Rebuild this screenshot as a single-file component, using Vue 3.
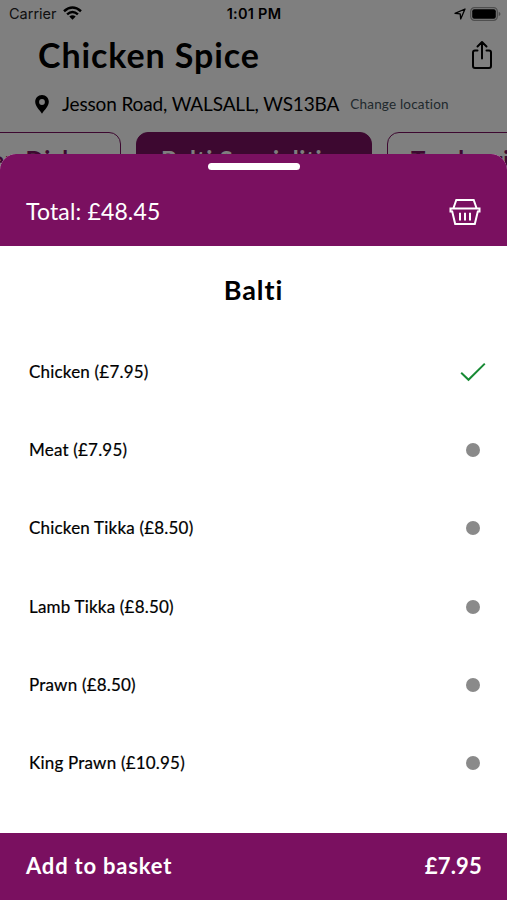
<script setup>
import { ref } from 'vue'

const options = [
  { name: 'Chicken', price: '7.95' },
  { name: 'Meat', price: '7.95' },
  { name: 'Chicken Tikka', price: '8.50' },
  { name: 'Lamb Tikka', price: '8.50' },
  { name: 'Prawn', price: '8.50' },
  { name: 'King Prawn', price: '10.95' },
]
const selected = ref(0)
</script>

<template>
  <div class="screen">
    <div class="page">
      <div class="status">
        <div class="status-left">
          <span class="carrier">Carrier</span>
          <svg class="wifi" width="19" height="14" viewBox="0 0 19 14">
            <g fill="none" stroke="#000" stroke-width="2.5">
              <path d="M1 5.2Q9.500 -2.300 18 5.200" />
              <path d="M4.100 8.400Q9.500 3.700 14.900 8.400" />
            </g>
            <path d="M6.300 10.400Q9.500 7.900 12.700 10.400L9.500 13.700Z" />
          </svg>
        </div>
        <span class="time">1:01 PM</span>
        <div class="status-right">
          <svg width="12" height="12" viewBox="0 0 12 12">
            <path d="M1 5.400L11 1L6.700 11L6.200 5.900Z" fill="none" stroke="#000" stroke-width="1.300" stroke-linejoin="round" />
          </svg>
          <svg width="31" height="14" viewBox="0 0 31 14">
            <rect x=".7" y=".7" width="26.600" height="12.600" rx="3.700" fill="none" stroke="#000" stroke-opacity=".38" stroke-width="1.300" />
            <rect x="2.200" y="2.300" width="23.600" height="9.400" rx="2" />
            <path d="M28.700 4.700Q30.500 5.500 30.500 7T28.700 9.300Z" fill-opacity=".4" />
          </svg>
        </div>
      </div>
      <div class="title-row">
        <h1>Chicken Spice</h1>
        <svg width="22" height="30" viewBox="0 0 22 30" fill="none" stroke="#000" stroke-width="2" stroke-linejoin="round" stroke-linecap="round">
          <path d="M6.500 10.500H4Q2 10.500 2 12.500V26Q2 28 4 28H18Q20 28 20 26V12.500Q20 10.500 18 10.500H15.500M11 18.500V2.500M6.500 6.500L11 2L15.500 6.500" />
        </svg>
      </div>
      <div class="address-row">
        <svg width="14" height="19" viewBox="0 0 14 19">
          <path fill-rule="evenodd" d="M7 0C3 0 .2 3 .2 6.800C.2 11 4 14.500 7 18.700C10 14.500 13.800 11 13.800 6.800C13.800 3 11 0 7 0ZM7 4.100A2.900 2.900 0 1 1 7 9.900A2.900 2.900 0 1 1 7 4.100Z" />
        </svg>
        <span class="address">Jesson Road, WALSALL, WS13BA</span>
        <span class="change">Change location</span>
      </div>
      <div class="tabs">
        <div class="tab first">Chicken Dishes</div>
        <div class="tab active">Balti Specialities</div>
        <div class="tab last">Tandoori</div>
      </div>
    </div>
    <div class="shade"></div>

    <section class="sheet">
      <header class="sheet-head">
        <div class="grip"></div>
        <div class="total-row">
          <span class="total">Total: £48.45</span>
          <svg width="32" height="28" viewBox="0 0 32 28" fill="none" stroke="#fff" stroke-width="2">
            <path d="M4.500 10L7.300 2H24.700L27.500 10M1.500 10.500H30.500V13.500H28.800L25.800 26H6.200L3.200 13.500H1.500ZM11 14.800V22.500M16 14.800V22.500M21 14.800V22.500" />
          </svg>
        </div>
      </header>
      <h2>Balti</h2>
      <ul>
        <li v-for="(o, i) in options" :key="o.name" @click="selected = i">
          <span class="label">{{ o.name }} (£{{ o.price }})</span>
          <svg v-if="selected === i" class="tick" width="26" height="20" viewBox="0 0 26 20">
            <path d="M1.200 10.700L8.500 17.800L24.800 1.600" fill="none" stroke="#178a34" stroke-width="2" />
          </svg>
          <i v-else class="dot"></i>
        </li>
      </ul>
      <footer>
        <span class="add">Add to basket</span>
        <span class="price">£7.95</span>
      </footer>
    </section>
  </div>
</template>

<style>
body { margin: 0; background: #808080; }
</style>

<style scoped>
.screen { position: relative; width: 507px; height: 900px; overflow: hidden; background: #fff; color: #000; font-family: Lato, "Open Sans", sans-serif; }
.screen svg { display: block; flex: none; }
.page { width: 507px; white-space: nowrap; }
.shade { position: absolute; inset: 0; background: rgba(0, 0, 0, .5); }
.status { display: grid; grid-template-columns: 1fr auto 1fr; height: 27px; align-items: center; padding: 0 6px 0 9px; box-sizing: border-box; font-family: Inter, sans-serif; font-size: 14.500px; }
.status-left { display: flex; gap: 6px; align-items: center; }
.wifi { margin-top: -1px; }
.carrier { color: #222; }
.time { font-weight: 600; font-size: 14.500px; letter-spacing: .25px; margin-right: 2px; }
.status-right { display: flex; justify-content: flex-end; align-items: center; gap: 4px; }
.title-row { display: flex; justify-content: space-between; height: 56px; align-items: center; padding: 0 14px 0 38px; }
h1 { margin: 0; font-size: 34px; line-height: 40px; font-weight: 700; letter-spacing: .9px; }
.address-row { display: flex; align-items: center; height: 41px; padding: 1px 0 0 35px; }
.address { margin: -2px 0 0 13px; font-size: 19px; letter-spacing: -.14px; }
.change { margin: -1px 0 0 11px; font-size: 13.500px; color: #43535b; letter-spacing: .2px; }
.tabs { display: flex; gap: 15px; margin: 7px 0 0 -115px; }
.tab { box-sizing: border-box; height: 52px; border: 1.500px solid #7a1060; border-radius: 12px; color: #7a1060; font-size: 24px; font-weight: 700; line-height: 53px; text-align: center; flex: none; width: 236px; letter-spacing: .65px; }
.tab.active { background: #7a1060; color: #fff; }
.tab.first { text-align: right; padding-right: 19px; }
.tab.last { text-align: left; padding-left: 23px; }
.sheet { position: absolute; left: 0; right: 0; top: 154px; bottom: 0; display: flex; flex-direction: column; background: #fff; border-radius: 16px 16px 0 0; overflow: hidden; }
.sheet-head { height: 92px; background: #7a1060; color: #fff; }
.grip { width: 92px; height: 7px; margin: 9px auto 0; border-radius: 4px; background: #fff; }
.total-row { display: flex; justify-content: space-between; align-items: center; height: 54px; padding: 15px 26px 0; }
.total { margin-top: -2px; font-size: 23px; letter-spacing: .15px; }
h2 { margin: 28px 0 0; height: 32px; line-height: 32px; font-size: 27px; text-align: center; letter-spacing: .9px; }
ul { list-style: none; margin: 27px 0 0; padding: 0; }
li { display: flex; justify-content: space-between; align-items: center; height: 78.200px; padding: 0 27px 0 29px; font-size: 17px; letter-spacing: .2px; -webkit-text-stroke: .2px #000; }
.label { margin-top: -1px; }
.tick { margin-right: -6px; }
.dot { width: 14px; height: 14px; border-radius: 50%; background: #8a8a8a; }
footer { display: flex; justify-content: space-between; align-items: center; height: 67px; margin-top: auto; padding: 0 25px 0 26px; background: #7a1060; color: #fff; font-size: 22px; line-height: 28px; font-weight: 700; letter-spacing: .8px; }
.add, .price { margin-top: -1px; }
.price { letter-spacing: .2px; }
</style>
